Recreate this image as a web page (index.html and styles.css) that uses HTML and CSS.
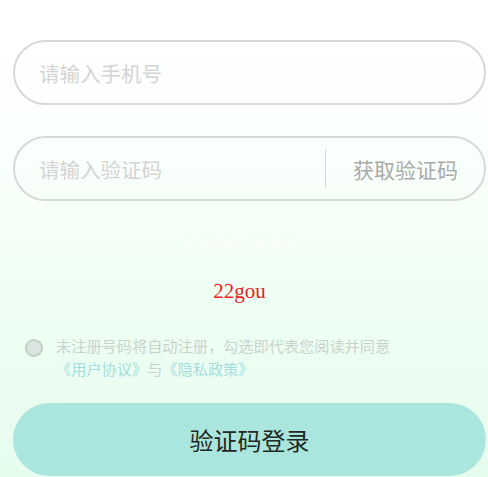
FILE: index.html
```html
<!DOCTYPE html>
<html lang="zh">
<head>
    <meta charset="UTF-8">
    <meta name="viewport" content="width=device-width, initial-scale=1.0">
    <title>验证码登录</title>
    <link rel="stylesheet" href="styles.css">
</head>
<body>

    <div class="page">
        <div class="field">
            <input type="text" class="field-input" placeholder="请输入手机号">
        </div>

        <div class="field">
            <input type="text" class="field-input" placeholder="请输入验证码">
            <span class="divider"></span>
            <span class="send-code">获取验证码</span>
        </div>

        <div class="quick-login">本机号码一键登录 &gt;</div>

        <div class="brand">22gou</div>

        <div class="agree">
            <span class="check"></span>
            <p class="agree-text">未注册号码将自动注册，勾选即代表您阅读并同意<br><a class="link">《用户协议》</a>与<a class="link">《隐私政策》</a></p>
        </div>

        <button class="login-btn">验证码登录</button>
    </div>

</body>
</html>
```

FILE: styles.css
```css
html, body {
    margin: 0;
    height: 100%;
}
body {
    font-family: "Noto Sans CJK SC", "Noto Sans", sans-serif;
    background: linear-gradient(to bottom, #ffffff 0%, #fbfffc 30%, #effef3 60%, #e6fdee 100%);
    overflow: hidden;
}
.page {
    padding: 40px 2px 0 13px;
}
.field {
    display: flex;
    align-items: center;
    height: 65px;
    box-sizing: border-box;
    border: 2px solid #d8d8d8;
    border-radius: 33px;
    padding: 0 25px 0 24px;
    margin-bottom: 31px;
}
.field + .field {
    margin-bottom: 0;
}
.field-input {
    flex: 1;
    min-width: 0;
    border: none;
    outline: none;
    background: transparent;
    font-family: inherit;
    font-size: 20.5px;
    color: #333;
    padding: 0;
}
.field-input::placeholder {
    color: #d4d4d4;
}
.divider {
    width: 1px;
    height: 38px;
    background: #d6d6d6;
    margin-right: 27px;
}
.send-code {
    font-size: 21px;
    color: #aaaaaa;
    margin-right: 1px;
}
.quick-login {
    margin-top: 28px;
    line-height: 24px;
    text-align: center;
    font-size: 14px;
    color: rgba(255, 255, 255, 0.75);
    padding-right: 9px;
}
.brand {
    margin-top: 26px;
    line-height: 24px;
    text-align: center;
    font-family: "Liberation Serif", serif;
    font-size: 21px;
    color: #ee1c25;
    padding-right: 20px;
}
.agree {
    display: flex;
    align-items: flex-start;
    margin: 32px 0 0 12px;
}
.check {
    width: 14px;
    height: 14px;
    flex: none;
    border: 2px solid #c3cec8;
    border-radius: 50%;
    background: #d9e5de;
    margin-top: 4px;
    margin-right: 13px;
}
.agree-text {
    margin: 0;
    font-size: 15.2px;
    line-height: 23px;
    color: #c9d3ce;
    margin-top: -1px;
}
.link {
    color: #a4dfe0;
}
.login-btn {
    display: block;
    width: 100%;
    height: 73px;
    margin-top: 23px;
    border: none;
    border-radius: 37px;
    background: #abe6de;
    font-family: inherit;
    font-size: 24px;
    color: #222822;
    cursor: pointer;
}
```
